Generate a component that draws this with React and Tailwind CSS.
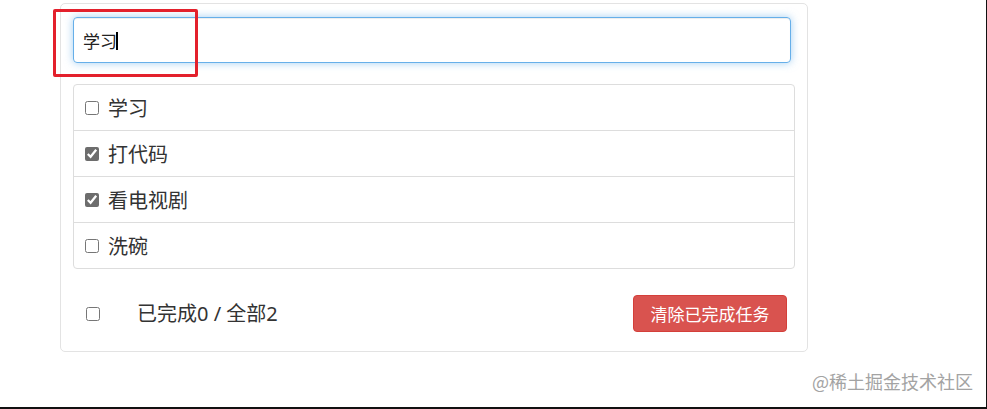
import React, { useState } from 'react'

const initialTodos = [
  { id: 1, name: '学习', done: false },
  { id: 2, name: '打代码', done: true },
  { id: 3, name: '看电视剧', done: true },
  { id: 4, name: '洗碗', done: false },
]

const font = { fontFamily: '"Noto Sans CJK SC", "Noto Sans", sans-serif' }
const mixedFont = { fontFamily: '"Noto Sans", "Noto Sans CJK SC", sans-serif' }

const TodoItem = ({ todo, onToggle }) => (
  <li className="flex items-center h-[46px] last:h-[45px] border-b border-[#ddd] last:border-b-0 pl-[11px]">
    <input
      type="checkbox"
      checked={todo.done}
      onChange={() => onToggle(todo.id)}
      className="w-[14px] h-[14px] m-0 accent-[#6d6d6d]"
    />
    <span className="ml-[9px] text-[20px] leading-none text-[#333]">{todo.name}</span>
  </li>
)

export default function App() {
  const [todos, setTodos] = useState(initialTodos)
  const [text, setText] = useState('学习')

  const toggle = (id) =>
    setTodos(todos.map((t) => (t.id === id ? { ...t, done: !t.done } : t)))

  return (
    <div
      className="relative w-[987px] h-[409px] bg-white border-b-2 border-r border-[#111] overflow-hidden"
      style={font}
    >
      <div className="ml-[60px] pt-[3px] w-[748px]">
        <div className="border border-[#e3e3e3] rounded-[5px] px-[12px] pt-[13px]">
          {/* Header input */}
          <div className="relative">
            <input
              value={text}
              onChange={(e) => setText(e.target.value)}
              className="block w-[718px] h-[46px] px-[9px] text-[17px] text-[#222] rounded-[4px] border border-[#66afe9] outline-none shadow-[inset_0_1px_1px_rgba(0,0,0,0.075),0_0_8px_rgba(102,175,233,0.6)]"
              style={font}
            />
            {/* caret */}
            <span className="absolute left-[43px] top-[15px] w-[2px] h-[18px] bg-black pointer-events-none" />
          </div>

          {/* List */}
          <ul className="mt-[21px] border border-[#ddd] rounded-[4px] w-[722px]">
            {todos.map((todo) => (
              <TodoItem key={todo.id} todo={todo} onToggle={toggle} />
            ))}
          </ul>

          {/* Footer */}
          <div className="flex items-center justify-between w-[722px] pt-[26px] pb-[19px] pl-[13px] pr-[8px]">
            <div className="flex items-center">
              <input type="checkbox" className="w-[14px] h-[14px] m-0 accent-[#6d6d6d]" />
              <span className="ml-[37px] text-[20px] leading-none text-[#333]" style={mixedFont}>
                已完成0 / 全部2
              </span>
            </div>
            <button
              className="h-[37px] w-[154px] rounded-[4px] bg-[#d9534f] border border-[#d43f3a] text-white text-[17px] leading-none"
              style={font}
            >
              清除已完成任务
            </button>
          </div>
        </div>
      </div>

      {/* Annotation box */}
      <div className="absolute left-[53px] top-[9px] w-[145px] h-[68px] border-[3px] border-[#e3202c] rounded-[2px] pointer-events-none" />

      {/* Watermark */}
      <div className="absolute left-[812px] top-[372px] text-[18px] leading-none text-[#a3a3a3]">
        @稀土掘金技术社区
      </div>
    </div>
  )
}
